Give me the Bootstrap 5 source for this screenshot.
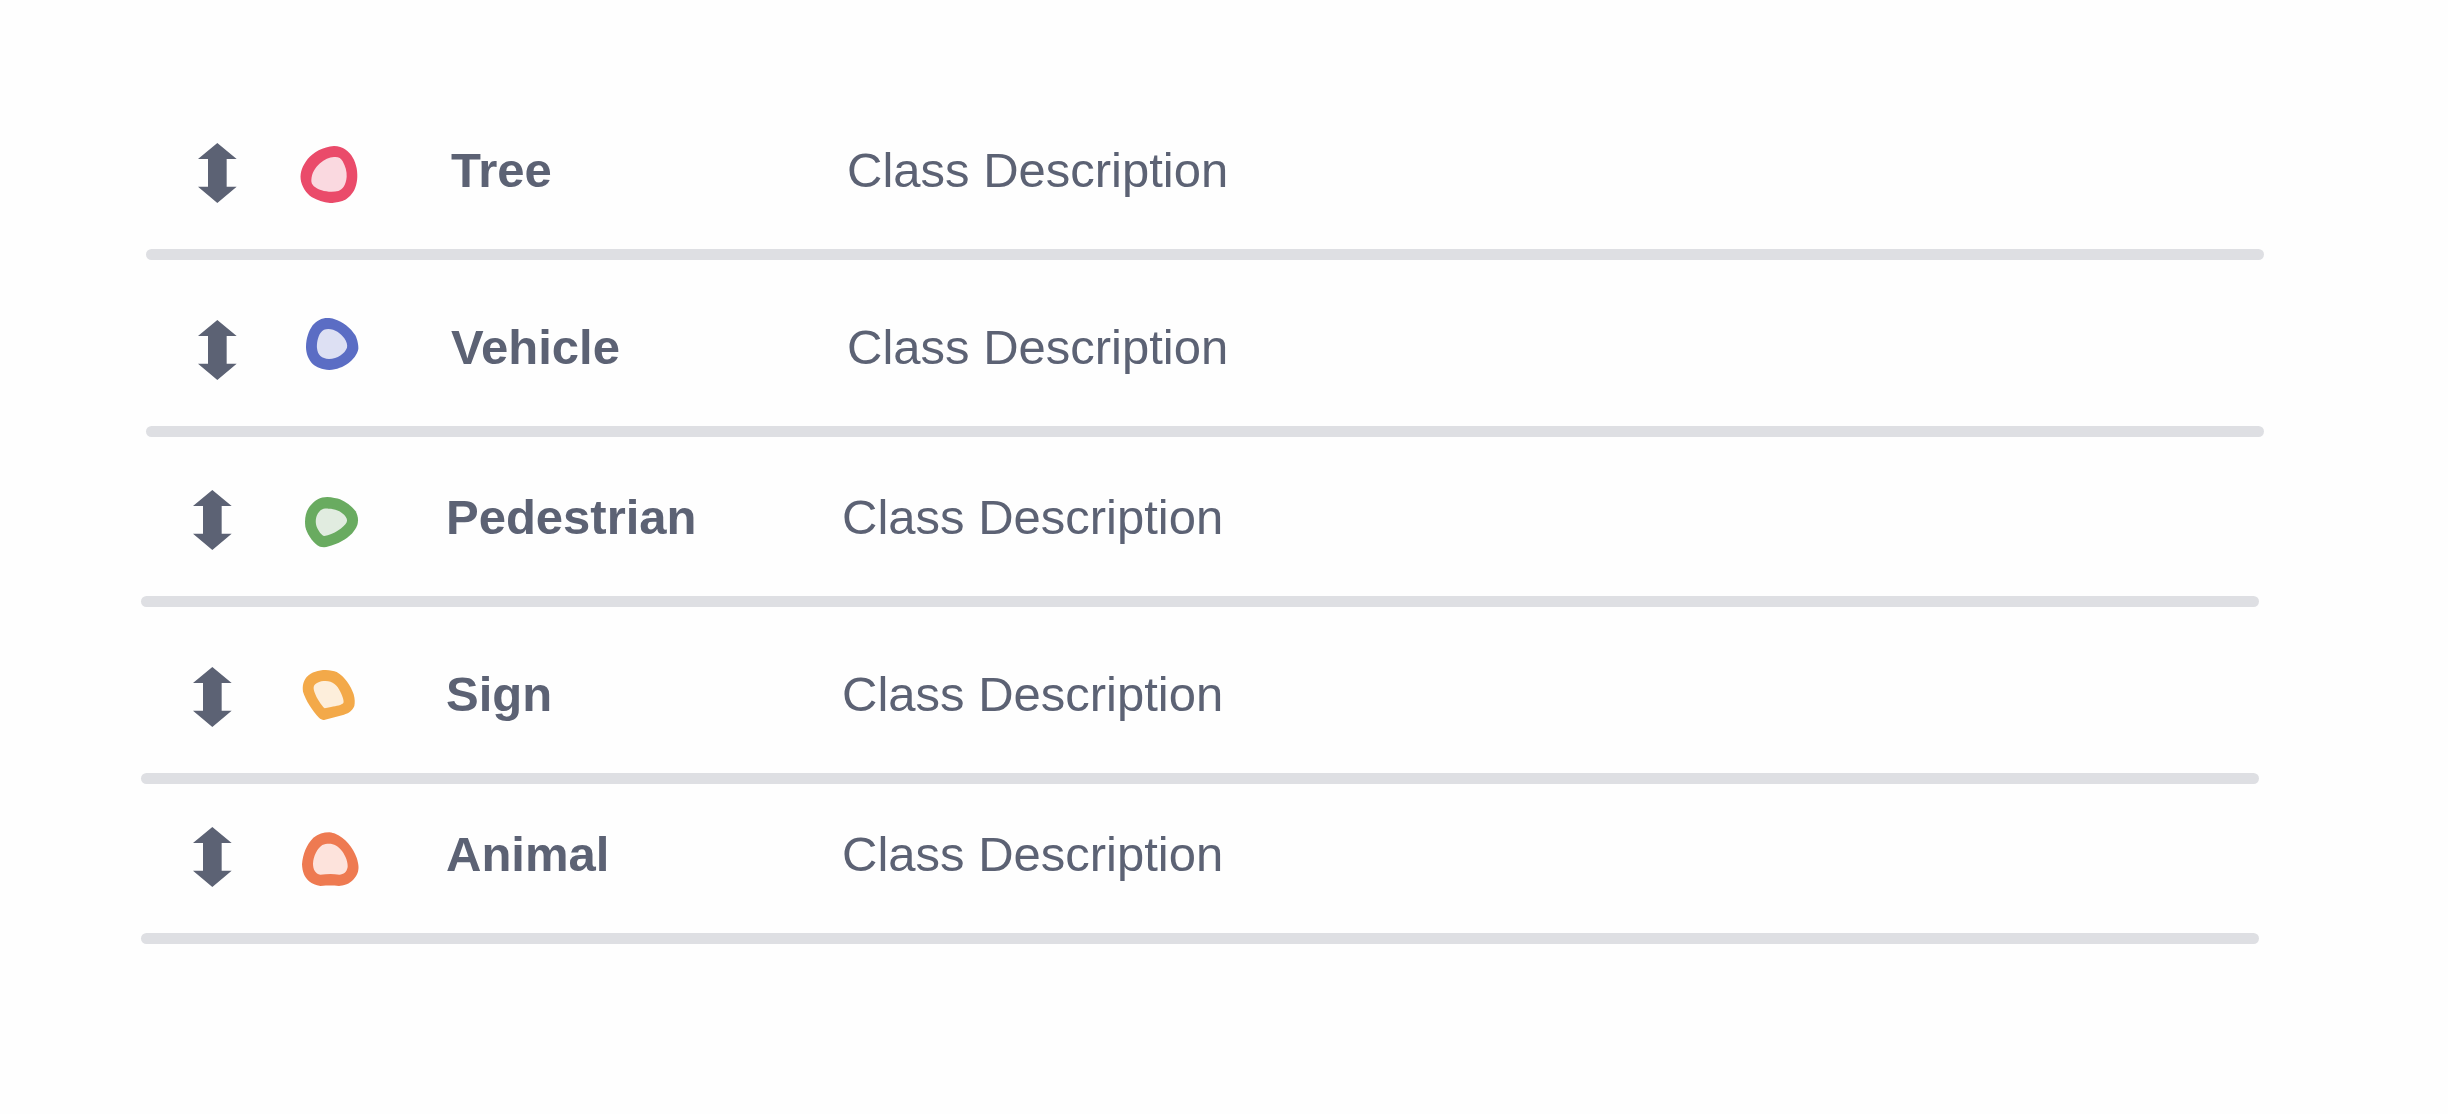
<!DOCTYPE html>
<html lang="en">
<head>
<meta charset="utf-8">
<meta name="viewport" content="width=device-width, initial-scale=1">
<title>Classes</title>
<link href="https://cdn.jsdelivr.net/npm/bootstrap@5.3.0/dist/css/bootstrap.min.css" rel="stylesheet">
<style>
  body { background: #fefefe; color: #5c6274; font-family: "Liberation Sans", Arial, sans-serif; }
  .class-list { padding: 83px 184px 48px 146px; }
  .class-item { padding: 54px 0 0 52px; position: relative; }
  .class-item::after { content: ""; display: block; height: 11px; margin: 40px 0 0 -52px; border-radius: 6px; background: #dedfe3; }
  .lower-group { margin: 0 5px 0 -5px; }
  .lower-group .class-item:first-child { padding-top: 47px; }
  .lower-group .class-item:last-child { padding-top: 37px; }
  .drag-handle { width: 39px; height: 60px; color: inherit; margin-right: 59px; cursor: grab; }
  .class-shape { width: 72px; height: 72px; margin-right: 83px; }
  .class-name, .class-text { font-size: 49px; line-height: 56px; padding-bottom: 6px; white-space: nowrap; }
  .class-name { width: 396px; }
</style>
</head>
<body>
<svg class="d-none" aria-hidden="true">
  <symbol id="arrows" viewBox="205 71 117 180"><path fill="currentColor" d="M263 71 321 119H291V202H321L263 251 205 202H235V119H205Z"/></symbol>
</svg>
<main class="class-list">
  <ul class="list-unstyled m-0">
    <li class="class-item">
      <div class="d-flex align-items-center">
        <button type="button" class="drag-handle d-block flex-shrink-0 border-0 bg-transparent p-0" aria-label="Reorder Tree"><svg class="d-block w-100 h-100"><use href="#arrows"/></svg></button>
        <svg class="class-shape flex-shrink-0" viewBox="498 51 216 216" aria-hidden="true">
          <path fill="#ea4b6a" d="M612 78C625 78 638 82 645 88C665 102 675 120 680 145C684 170 682 190 673 210C662 228 652 238 637 243C620 248 610 249 600 249C580 247 562 241 546 232C528 220 515 200 512 178C510 155 518 137 533 117C548 98 580 80 612 78Z"/>
          <path fill="#fad9e0" d="M612 111C625 110 633 114 638 124C646 138 651 155 650 170C648 195 638 208 625 213C610 217 590 216 575 211C555 204 543 195 544 180C545 160 555 143 570 130C583 118 598 112 612 111Z"/>
        </svg>
        <div class="class-name fw-bold flex-shrink-0">Tree</div>
        <div class="class-text">Class Description</div>
      </div>
    </li>
    <li class="class-item">
      <div class="d-flex align-items-center">
        <button type="button" class="drag-handle d-block flex-shrink-0 border-0 bg-transparent p-0" aria-label="Reorder Vehicle"><svg class="d-block w-100 h-100"><use href="#arrows"/></svg></button>
        <svg class="class-shape flex-shrink-0" viewBox="498 42 216 216" aria-hidden="true">
          <path fill="#5b6dc4" d="M592 54C600 54 607 55 612 57C640 66 662 84 676 106C683 120 686 138 685 147C681 165 670 178 655 190C640 201 620 209 598 210C575 208 560 202 548 192C535 178 528 160 528 140C529 115 535 95 548 76C560 62 575 54 592 54Z"/>
          <path fill="#dde0f3" d="M595 87C615 87 632 100 643 115C650 125 653 135 651 143C645 160 622 177 597 177C575 176 563 165 561 145C560 130 563 110 572 98C578 90 585 87 595 87Z"/>
        </svg>
        <div class="class-name fw-bold flex-shrink-0">Vehicle</div>
        <div class="class-text">Class Description</div>
      </div>
    </li>
  </ul>
  <ul class="lower-group list-unstyled">
    <li class="class-item">
      <div class="d-flex align-items-center">
        <button type="button" class="drag-handle d-block flex-shrink-0 border-0 bg-transparent p-0" aria-label="Reorder Pedestrian"><svg class="d-block w-100 h-100"><use href="#arrows"/></svg></button>
        <svg class="class-shape flex-shrink-0" viewBox="483 42 216 216" aria-hidden="true">
          <path fill="#69ab60" d="M592 81C606 82 622 85 630 88C650 97 667 110 677 124C684 138 686 150 682 165C674 185 660 198 645 208C625 221 600 230 582 232C572 232 567 230 562 226C545 212 530 190 526 170C523 145 527 125 540 108C555 90 570 81 592 81Z"/>
          <path fill="#e1ece0" d="M595 116C615 116 632 123 643 135C650 143 653 150 650 157C643 172 610 195 583 198C575 196 566 184 560 170C555 155 557 138 567 126C574 117 583 115 595 116Z"/>
        </svg>
        <div class="class-name fw-bold flex-shrink-0">Pedestrian</div>
        <div class="class-text">Class Description</div>
      </div>
    </li>
    <li class="class-item">
      <div class="d-flex align-items-center">
        <button type="button" class="drag-handle d-block flex-shrink-0 border-0 bg-transparent p-0" aria-label="Reorder Sign"><svg class="d-block w-100 h-100"><use href="#arrows"/></svg></button>
        <svg class="class-shape flex-shrink-0" viewBox="483 30 216 216" aria-hidden="true">
          <path fill="#f3a949" d="M587 57C600 57 612 60 620 63C645 78 662 103 671 130C675 145 675 155 673 165C667 180 655 187 642 191L585 206C578 208 573 205 567 200C547 178 528 150 519 122C517 105 519 92 530 78C545 63 565 57 587 57Z"/>
          <path fill="#fdeedb" d="M587 90C608 90 622 103 631 122C638 137 643 150 640 156C635 162 620 165 603 168L584 172C575 163 560 143 553 122C549 108 551 101 561 96C570 91 578 90 587 90Z"/>
        </svg>
        <div class="class-name fw-bold flex-shrink-0">Sign</div>
        <div class="class-text">Class Description</div>
      </div>
    </li>
    <li class="class-item">
      <div class="d-flex align-items-center">
        <button type="button" class="drag-handle d-block flex-shrink-0 border-0 bg-transparent p-0" aria-label="Reorder Animal"><svg class="d-block w-100 h-100"><use href="#arrows"/></svg></button>
        <svg class="class-shape flex-shrink-0" viewBox="483 60 216 216" aria-hidden="true">
          <path fill="#ee7a51" d="M598 94C606 95 612 97 616 98C645 110 668 138 680 170C686 190 687 200 684 212C678 230 665 243 650 250C640 253 632 255 627 255C608 253 595 253 571 255C557 253 547 249 537 241C523 228 517 212 516 190C518 160 530 130 550 110C565 99 580 94 598 94Z"/>
          <path fill="#fde3dc" d="M597 128C612 128 624 135 636 150C648 166 654 185 653 198C650 214 641 220 628 221C608 218 590 219 571 221C556 218 549 205 549 188C550 165 562 142 577 132C583 129 590 128 597 128Z"/>
        </svg>
        <div class="class-name fw-bold flex-shrink-0">Animal</div>
        <div class="class-text">Class Description</div>
      </div>
    </li>
  </ul>
</main>
<script src="https://cdn.jsdelivr.net/npm/bootstrap@5.3.0/dist/js/bootstrap.bundle.min.js"></script>
</body>
</html>
